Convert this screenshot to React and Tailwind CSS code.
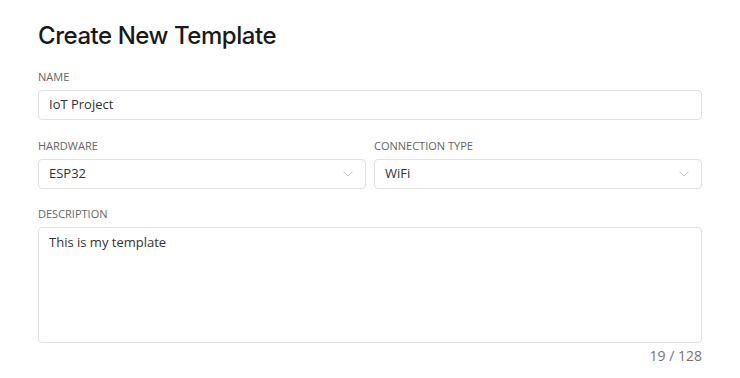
import React from "react";

function Chevron() {
  return (
    <svg width="10" height="6" viewBox="0 0 10 6" fill="none" className="shrink-0">
      <path d="M0.5 0.5 L5 5 L9.5 0.5" stroke="#c4c4c4" strokeWidth="1" />
    </svg>
  );
}

function Label({ children }) {
  return (
    <div className="text-[11px] leading-[14px] uppercase text-[#666] mb-[6px]">{children}</div>
  );
}

export default function App() {
  return (
    <div className="w-[740px] h-[378px] bg-white px-[38px] pt-[21px]" style={{ fontFamily: '"Open Sans", "Liberation Sans", sans-serif' }}>
      <h1 className="text-[24px] leading-[30px] text-[#1a1a1a] font-medium tracking-[-0.45px]" style={{ fontFamily: 'Inter, "Liberation Sans", sans-serif' }}>
        Create New Template
      </h1>
      <div className="mt-[19px]">
        <Label>Name</Label>
        <div className="h-[30px] border border-[#e2e2e2] rounded-[4px] flex items-center px-[10px] text-[13px] text-[#333]">
          IoT Project
        </div>
      </div>
      <div className="mt-[19px] grid grid-cols-2 gap-[8px]">
        <div>
          <Label>Hardware</Label>
          <div className="h-[30px] border border-[#e2e2e2] rounded-[4px] flex items-center justify-between pl-[10px] pr-[12px] text-[13px] text-[#333]">
            <span>ESP32</span>
            <Chevron />
          </div>
        </div>
        <div>
          <Label>Connection Type</Label>
          <div className="h-[30px] border border-[#e2e2e2] rounded-[4px] flex items-center justify-between pl-[10px] pr-[12px] text-[13px] text-[#333]">
            <span>WiFi</span>
            <Chevron />
          </div>
        </div>
      </div>
      <div className="mt-[18px]">
        <Label>Description</Label>
        <div className="h-[116px] border border-[#e2e2e2] rounded-[4px] px-[10px] pt-[5px] text-[13px] text-[#333]">
          This is my template
        </div>
        <div className="text-right text-[14px] text-[#777] mt-[2px]">19 / 128</div>
      </div>
    </div>
  );
}
